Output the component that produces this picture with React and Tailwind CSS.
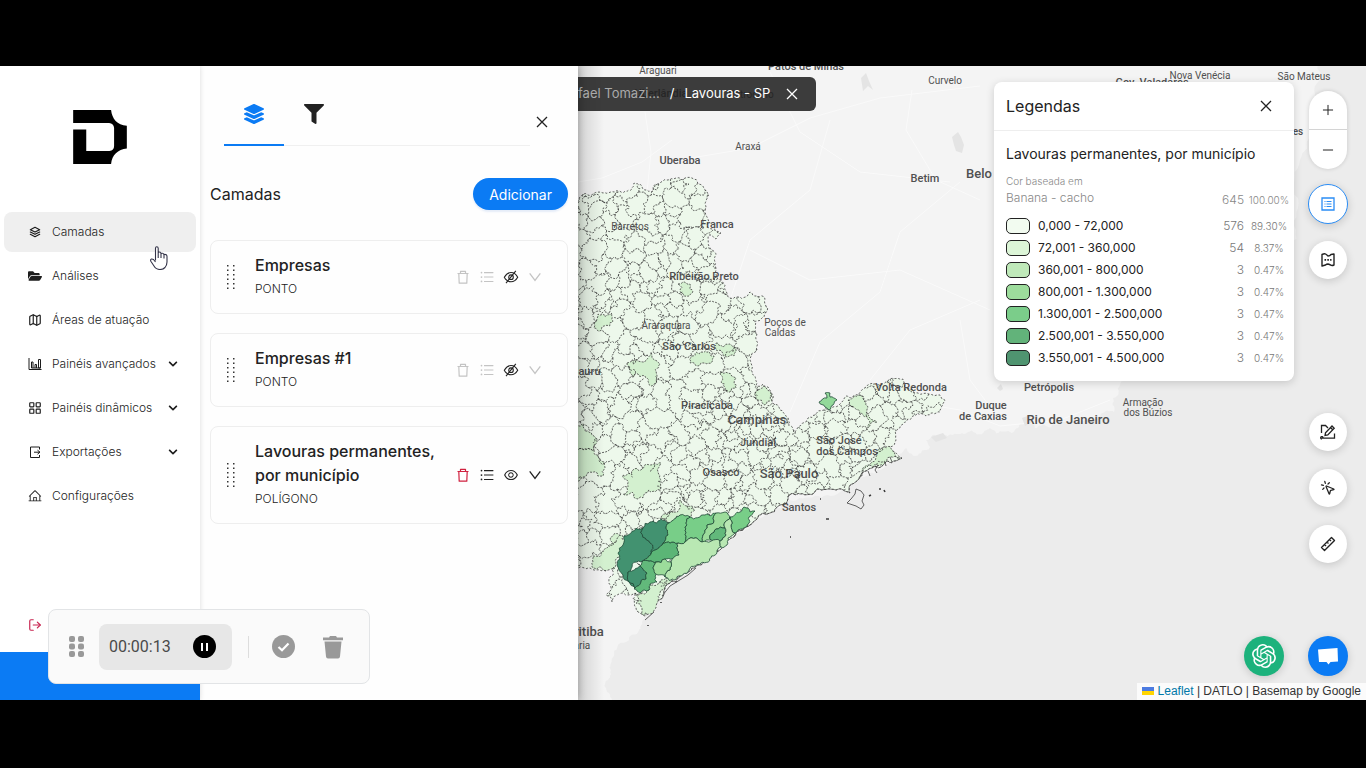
import React from "react";
import { FaFolderOpen, FaFilter, FaLayerGroup, FaChevronDown } from "react-icons/fa";
import { AiOutlineEye, AiOutlineUnorderedList } from "react-icons/ai";
import { SiOpenai } from "react-icons/si";
import { TbStack2 } from "react-icons/tb";
import { PiHouseLine } from "react-icons/pi";
import { Map as MapIcon, LayoutGrid, LogOut, MousePointerClick, Ruler, Plus, Minus } from "lucide-react";

/* ---------- map geometry ---------- */

function makeRandom(seed) {
  let s = seed >>> 0;
  return () => {
    s = (s * 1664525 + 1013904223) >>> 0;
    return s / 4294967296;
  };
}

function parse(str) {
  return str.split(" ").map((p) => p.split(",").map(Number));
}

// Crude fractal displacement so that borders look surveyed rather than straight.
// The shape depends only on the two end points, so neighbours share their border.
function roughLine(a, b, amount) {
  const flip = a[0] > b[0] || (a[0] === b[0] && a[1] > b[1]);
  const from = flip ? b : a;
  const to = flip ? a : b;
  const rnd = makeRandom(Math.round(from[0] * 131 + from[1] * 717 + to[0] * 37 + to[1] * 11));
  rnd();
  const split = (p, q, depth) => {
    const len = Math.hypot(q[0] - p[0], q[1] - p[1]);
    if (depth === 0 || len < 3) return [q];
    const off = (rnd() - 0.5) * Math.min(len, 16) * amount;
    const m = [
      (p[0] + q[0]) / 2 - ((q[1] - p[1]) / len) * off,
      (p[1] + q[1]) / 2 + ((q[0] - p[0]) / len) * off,
    ];
    return [...split(p, m, depth - 1), ...split(m, q, depth - 1)];
  };
  const line = [from, ...split(from, to, 4)];
  if (flip) line.reverse();
  return line.slice(1);
}

function pathOf(points) {
  return points.map((p) => p[0].toFixed(1) + " " + p[1].toFixed(1)).join("L");
}

function roughPolygon(points, amount) {
  const out = [points[0]];
  points.forEach((p, i) => {
    out.push(...roughLine(p, points[(i + 1) % points.length], amount));
  });
  return "M" + pathOf(out) + "Z";
}

const STATE = parse(
  "560,204 578,201 583,194 603,193 618,191 632,189 634,183 645,190 652,192 661,182 668,180 682,180 692,178 698,184 709,195 706,207 707,226 712,229 721,233 716,239 709,235 712,250 715,262 716,275 722,282 728,297 738,297 750,292 757,296 765,299 764,317 753,320 757,335 757,350 750,360 752,374 757,386 768,387 773,395 772,403 780,410 788,425 795,434 808,418 815,415 824,410 840,404 846,396 858,395 866,387 880,385 889,380 903,379 905,390 918,393 940,395 945,401 940,412 926,416 917,413 907,420 897,430 896,440 890,447 895,452 902,458 888,461 872,468 862,473 858,480 849,487 850,493 836,490 817,489 800,494 788,496 784,505 770,513 757,519 750,525 738,531 728,540 720,550 700,565 685,573 665,587 659,600 656,608 645,616 638,612 635,594 628,595 619,594 612,602 606,595 609,578 614,567 608,570 590,568 560,568"
);
const STATE_PATH = roughPolygon(STATE, 0.45);
const COAST = parse(
  "902,458 888,461 872,468 862,473 858,480 849,487 850,493 836,490 817,489 800,494 788,496 784,505 770,513 757,519 750,525 738,531 728,540 720,550 700,565 685,573 665,587 659,600"
);

function clipHalf(poly, a, b) {
  const mx = (a[0] + b[0]) / 2;
  const my = (a[1] + b[1]) / 2;
  const dx = b[0] - a[0];
  const dy = b[1] - a[1];
  const side = (p) => (p[0] - mx) * dx + (p[1] - my) * dy;
  const out = [];
  for (let i = 0; i < poly.length; i++) {
    const p = poly[i];
    const q = poly[(i + 1) % poly.length];
    const sp = side(p);
    const sq = side(q);
    if (sp <= 0) out.push(p);
    if (sp < 0 !== sq < 0) {
      const t = sp / (sp - sq);
      out.push([p[0] + (q[0] - p[0]) * t, p[1] + (q[1] - p[1]) * t]);
    }
  }
  return out;
}

function insideAny(polys, x, y) {
  return polys.some((poly) => {
    let hit = false;
    for (let i = 0, j = poly.length - 1; i < poly.length; j = i++) {
      const [xi, yi] = poly[i];
      const [xj, yj] = poly[j];
      if (yi > y !== yj > y && x < ((xj - xi) * (y - yi)) / (yj - yi) + xi) hit = !hit;
    }
    return hit;
  });
}

const PALE = [
  "678,284 683,282 690,284 693,292 689,296 681,293",
  "594,323 598,314 612,313 613,321 604,326 600,331 594,328",
  "627,363 638,361 646,360 651,352 657,361 660,364 657,377 652,386 645,376 638,374 633,377",
  "716,343 730,344 736,350 734,356 722,352 716,350",
  "692,356 702,352 714,356 712,362 698,366 690,363",
  "720,372 728,373 736,378 736,388 730,392 721,382",
  "758,390 764,386 772,393 772,400 764,405 756,399",
  "570,422 584,424 592,435 594,450 570,452",
  "570,452 594,450 600,460 603,476 570,479",
  "623,475 633,470 661,463 658,472 661,488 645,493 638,499 623,494",
  "661,517 675,512 681,500 695,510 691,517 680,515 669,523",
  "593,556 613,543 611,537 622,535 623,547 616,563 615,568 593,568",
  "635,593 649,590 650,584 661,580 667,578 673,581 660,593 658,607 650,616 641,616 636,603",
  "848,400 862,396 868,407 870,418 877,422 868,428 863,415 852,407",
  "902,458 892,448 883,447 877,455 872,462 862,470 863,472 877,465 890,457",
];
const PALE_POLYS = PALE.map(parse);

const SHADED = [
  ["#429270", "624,536 641,529 643,528 650,543 651,554 641,562 628,572 629,582 635,588 623,575 617,565 618,553 623,545"],
  ["#429270", "643,528 650,522 661,519 669,523 668,535 663,543 651,554 650,543"],
  ["#429270", "628,572 640,566 647,573 641,582 635,588 629,582"],
  ["#5bb576", "678,543 679,555 665,559 656,562 642,562 651,554 663,543 670,543"],
  ["#62b97b", "642,562 656,562 654,570 657,582 650,584 649,590 640,593 634,589 635,588 641,582 647,573 640,566"],
  ["#78ce88", "669,523 680,515 690,517 685,527 685,542 678,543 670,543 663,543 668,535"],
  ["#78ce88", "690,517 705,515 716,513 707,525 703,535 702,542 685,542 685,527"],
  ["#9cdc9b", "716,513 725,512 730,517 725,522 725,528 716,529 711,534 711,540 702,542 703,535 707,525"],
  ["#62b97b", "716,529 725,528 726,535 720,541 711,540 711,534"],
  ["#78ce88", "730,517 740,512 744,507 750,512 755,511 749,517 749,523 735,533 731,525"],
  ["#b9e8b3", "678,543 685,542 702,542 720,541 721,547 701,563 688,572 675,580 665,577 670,570 671,562 679,555"],
  ["#b9e8b3", "730,517 731,525 735,533 728,538 727,545 721,547 720,541 726,535 725,528 725,522"],
  ["#9cdc9b", "656,562 665,559 671,562 670,570 665,577 658,575 654,570"],
  ["#93d99a", "819,402 827,398 825,393 830,393 830,397 837,400 833,405 829,410 825,407"],
];

function buildBorders() {
  const rnd = makeRandom(4211);
  const seeds = [];
  for (let y = 164; y < 632; y += 13) {
    for (let x = 562; x < 960; x += 13) {
      const keep = rnd();
      const px = x + (rnd() - 0.5) * 20;
      const py = y + (rnd() - 0.5) * 20;
      const metro = px > 680 && px < 800 && py > 385 && py < 500;
      if (keep < (metro ? 0.98 : 0.72) && !insideAny(PALE_POLYS, px, py)) seeds.push([px, py]);
    }
  }
  PALE_POLYS.forEach((p) => {
    seeds.push([p.reduce((s, q) => s + q[0], 0) / p.length, p.reduce((s, q) => s + q[1], 0) / p.length]);
  });
  const seen = new Set();
  let d = "";
  seeds.forEach((s) => {
    let cell = [[s[0] - 60, s[1] - 60], [s[0] + 60, s[1] - 60], [s[0] + 60, s[1] + 60], [s[0] - 60, s[1] + 60]];
    seeds.forEach((o) => {
      if (o !== s && Math.abs(o[0] - s[0]) < 90 && Math.abs(o[1] - s[1]) < 90) cell = clipHalf(cell, s, o);
    });
    cell.forEach((p, i) => {
      const a = p;
      const b = cell[(i + 1) % cell.length];
      const key = Math.round(a[0] + b[0]) + ":" + Math.round(a[1] + b[1]);
      if (seen.has(key) || Math.hypot(a[0] - b[0], a[1] - b[1]) < 1) return;
      seen.add(key);
      if (insideAny(PALE_POLYS, (a[0] + b[0]) / 2, (a[1] + b[1]) / 2)) return;
      d += "M" + pathOf([a, ...roughLine(a, b, 0.9)]);
    });
  });
  return d;
}

const BORDERS = buildBorders();

const LABELS = [
  ["Araguari", 658, 74, "10px", 400],
  ["Patos de Minas", 806, 70, "11px", 500],
  ["Uberlândia", 661, 97, "11px", 500],
  ["Patrocínio", 751, 98, "10px", 400],
  ["Curvelo", 945, 84, "10px", 400],
  ["Gov. Valadares", 1152, 86, "11px", 500],
  ["Nova Venécia", 1200, 79, "10px", 400],
  ["São Mateus", 1304, 80, "10px", 400],
  ["Linhares", 1284, 135, "10px", 500],
  ["Araxá", 748, 150, "10px", 400],
  ["Uberaba", 680, 164, "11px", 500],
  ["Betim", 925, 182, "11px", 500],
  ["Belo Horizonte", 1009, 178, "13px", 500],
  ["Barretos", 630, 230, "10px", 400],
  ["Franca", 717, 228, "11px", 500],
  ["Ribeirão Preto", 704, 280, "11px", 500],
  ["Araraquara", 666, 329, "10px", 400],
  ["Poços de", 785, 326, "10px", 400],
  ["Caldas", 780, 336, "10px", 400],
  ["São Carlos", 689, 350, "11px", 500],
  ["Bauru", 586, 375, "11px", 500],
  ["Piracicaba", 707, 409, "11px", 500],
  ["Campinas", 757, 424, "13px", 500],
  ["Jundiaí", 758, 446, "11px", 500],
  ["Osasco", 721, 476, "11px", 500],
  ["São Paulo", 789, 478, "13px", 500],
  ["Santos", 799, 511, "11px", 500],
  ["São José", 839, 444, "11px", 500],
  ["dos Campos", 847, 455, "11px", 500],
  ["Volta Redonda", 911, 391, "11px", 500],
  ["Duque", 991, 409, "11px", 500],
  ["de Caxias", 983, 420, "11px", 500],
  ["Petrópolis", 1049, 391, "11px", 500],
  ["Rio de Janeiro", 1068, 424, "13px", 500],
  ["Armação", 1143, 406, "10px", 400],
  ["dos Búzios", 1148, 416, "10px", 400],
  ["Curitiba", 581, 636, "13px", 500],
  ["Araucária", 569, 649, "10px", 400],
];

function BaseMap() {
  return (
    <svg
      className="absolute inset-0 h-full w-full"
      viewBox="578 66 788 634"
      preserveAspectRatio="xMidYMid slice"
      role="img"
      aria-label="Mapa de lavouras permanentes por município"
    >
      <defs>
        <clipPath id="state">
          <path d={STATE_PATH} />
        </clipPath>
        <linearGradient id="edge" x1="0" x2="1">
          <stop offset="0" stopColor="#000" stopOpacity="0.14" />
          <stop offset="1" stopColor="#000" stopOpacity="0" />
        </linearGradient>
      </defs>
      <rect x="578" y="66" width="788" height="634" fill="#ececec" />
      <path
        fill="#f4f4f4"
        d={roughPolygon(
          parse("560,50 1322,50 1316,110 1300,160 1296,230 1270,290 1230,330 1180,345 1140,368 1120,385 1113,398 1114,412 1090,421 1060,424 1035,428 1028,421 1018,428 990,428 960,434 940,436 926,440 930,447 915,456 906,448 896,462 860,478 840,492 790,500 750,524 720,548 680,576 662,594 642,622 626,642 614,656 608,680 612,710 560,710"),
          0.5
        )}
      />
      <path
        fill="none"
        stroke="#fafafa"
        d="M645 112l6 40-4 40M672 140l-30 22-40 16-24 4M680 160l70-12 60-30 70-20 100-12M770 72l30 60 60 40 90 10M912 90l-6 40 30 50 44 20M830 120l-20 70-60 50-20 60M960 182l-60 50-20 60-60 50-30 70M750 250l60 30 90-10 90 40M870 380l40-50 70-30M900 400l60 10 40 16 60-6 50-20M960 320l10 60 30 40"
      />
      <path
        fill="#e4e4e4"
        d="M952 137l6-5 3 5 3 8-2 8-6-2-2-6zM861 78l5-5 3 8 4 9-5-4-5 5zM931 437l12-4 4 5-11 4zM1022 418l8-3 1 8-6 3zM997 388l4-4 2 5-3 2z"
      />
      <path d={STATE_PATH} fill="#edf8eb" />
      <g clipPath="url(#state)">
        {PALE.map((p) => (
          <path key={p} d={roughPolygon(parse(p), 0.6)} fill="#d3f0cf" />
        ))}
      </g>
      <g fill="#505050" textAnchor="middle" fontFamily="Roboto, sans-serif">
        {LABELS.map(([text, x, y, size, weight]) => (
          <text key={text} x={x} y={y} fontSize={size} fontWeight={weight}>
            {text}
          </text>
        ))}
      </g>
      <g fill="none" stroke="#3c3c3c" strokeWidth="0.8">
        <g clipPath="url(#state)" strokeDasharray="2 1.2">
          <path d={BORDERS} />
          {PALE.map((p) => (
            <path key={p} d={roughPolygon(parse(p), 0.6)} />
          ))}
        </g>
        <path d={STATE_PATH} strokeDasharray="2 1.8" />
        {COAST.slice(0, -1).map((p, i) => (
          <path key={i} strokeWidth="0.6" d={"M" + pathOf([p, ...roughLine(p, COAST[i + 1], 0.45)])} />
        ))}
        <path d="M856 489l5 2 3 4-2 6 2 4-3 4-5-3-9-3 4-4 4-5zM878 465l-3 5 2 3M868 471l2 5M862 473l-3 5M885 462l1 4M890 457l2 5M662 596l8-10 18-11 8-7M645 620l9-8" />
        <path strokeWidth="1.6" d="M826 519h3M869 496l2-1M879 489h2M790 537h1M648 625v1M820 499h1M661 602v1M884 490l1 2" />
      </g>
      <g stroke="#1f4a37" strokeWidth="0.8">
        {SHADED.map(([fill, p]) => (
          <path key={p} d={roughPolygon(parse(p), 0.5)} fill={fill} />
        ))}
      </g>
      <rect x="578" y="66" width="26" height="634" fill="url(#edge)" />
    </svg>
  );
}

/* ---------- small drawings ---------- */

function Close({ className }) {
  return (
    <svg className={className} viewBox="0 0 12 12" fill="none" stroke="currentColor" strokeWidth="1.3" aria-hidden="true">
      <path d="M1 1l10 10M11 1L1 11" />
    </svg>
  );
}

function Logo() {
  return (
    <svg className="h-[54px] w-[54px]" viewBox="0 0 160 161" role="img" aria-label="Datlo">
      <path d="M0 0H113C116 26 131 45 160 47V115C133 118 116 134 113 161H0V58H39V122H108Q122 120 122 107V54Q121 40 107 39H0Z" />
    </svg>
  );
}

function ChartIcon({ className }) {
  return (
    <svg className={className} viewBox="0 0 14 14" fill="none" stroke="currentColor" aria-hidden="true">
      <path d="M1 1v11.500h12.500M3.500 11V5h1.500v6M7 11V7.500h1.500V11M10.500 11V2.500h2V11zM3.500 11h9" />
    </svg>
  );
}

function ExportIcon({ className }) {
  return (
    <svg className={className} viewBox="0 0 14 14" fill="none" stroke="currentColor" aria-hidden="true">
      <path d="M11.500 4.500V2h-9v10.500h9V10M6 7.200h6M9.500 5.200l2.500 2-2.500 2" />
    </svg>
  );
}

function DragDots() {
  return (
    <svg className="h-7 w-3 shrink-0" viewBox="0 0 12 28" fill="#333" aria-hidden="true">
      {[0, 1, 2, 3, 4, 5].map((r) => (
        <g key={r}>
          <rect x="2" y={2 + r * 4.5} width="1.5" height="1.5" />
          <rect x="8" y={2 + r * 4.5} width="1.5" height="1.5" />
        </g>
      ))}
    </svg>
  );
}

function Trash({ className }) {
  return (
    <svg className={className} viewBox="0 0 16 16" fill="none" stroke="currentColor" strokeWidth="1.2" strokeLinejoin="round" aria-hidden="true">
      <path d="M2.500 4.500h11M5.500 4.500V2.300h5v2.200M3.800 4.500l.4 9.700h7.600l.4-9.700" />
    </svg>
  );
}

function EyeOff({ className }) {
  return (
    <svg className={className} viewBox="0 0 16 16" fill="none" stroke="currentColor" strokeWidth="1.1" aria-hidden="true">
      <path d="M1.300 8.200C3.500 4.600 5.700 3.500 8 3.500s4.700 1.100 6.700 4.700C12.700 11.800 10.500 12.700 8 12.700S3.300 11.800 1.300 8.200z" />
      <circle cx="8" cy="8.200" r="2.300" />
      <path d="M12.800 1.800L3 14.200" />
    </svg>
  );
}

function ChevronV({ className }) {
  return (
    <svg className={className} viewBox="0 0 14 14" fill="none" stroke="currentColor" strokeWidth="1.3" aria-hidden="true">
      <path d="M1.700 3.300L7 10.300l5.300-7" />
    </svg>
  );
}

/* ---------- sidebar ---------- */

const NAV = [
  { label: "Camadas", Icon: TbStack2, active: true },
  { label: "Análises", Icon: FaFolderOpen },
  { label: "Áreas de atuação", Icon: MapIcon },
  { label: "Painéis avançados", Icon: ChartIcon, more: true },
  { label: "Painéis dinâmicos", Icon: LayoutGrid, more: true },
  { label: "Exportações", Icon: ExportIcon, more: true },
  { label: "Configurações", Icon: PiHouseLine },
];

function Sidebar() {
  return (
    <aside className="z-20 flex w-[200px] shrink-0 flex-col bg-white shadow-[0_0_5px_rgba(0,0,0,0.14)]">
      <div className="flex justify-center pt-11 pb-12">
        <Logo />
      </div>
      <nav className="flex flex-col gap-1 px-1">
        {NAV.map(({ label, Icon, active, more }) => (
          <a
            key={label}
            href="#"
            className={
              active
                ? "flex h-10 items-center rounded-lg bg-[#efefef] pr-[18px] pl-6 text-[12px] font-light text-[#1c1c1c]"
                : "flex h-10 items-center rounded-lg pr-[18px] pl-6 text-[12px] font-light text-[#1c1c1c]"
            }
          >
            <Icon className="mr-2.5 h-3.5 w-3.5 shrink-0" />
            <span className="grow whitespace-nowrap">{label}</span>
            {more && <FaChevronDown className="h-2.5 w-2.5 shrink-0" />}
          </a>
        ))}
      </nav>
      <button type="button" aria-label="Sair" className="mt-auto mb-5 ml-7 w-3.5 text-[#c8234f]">
        <LogOut className="h-3.5 w-3.5 -scale-x-100 rotate-180" />
      </button>
      <div className="h-12 bg-[#0b7bf4]" />
    </aside>
  );
}

/* ---------- layers panel ---------- */

const LAYERS = [
  { title: "Empresas", kind: "PONTO" },
  { title: "Empresas #1", kind: "PONTO" },
  { title: "Lavouras permanentes, por município", kind: "POLÍGONO", on: true },
];

function LayerCard({ title, kind, on }) {
  const soft = on ? "flex w-6 justify-center text-[#222]" : "flex w-6 justify-center text-[#c4c4c4]";
  return (
    <li className="flex items-center rounded-lg border border-[#eee] py-3 pr-5 pl-3.5">
      <DragDots />
      <div className="ml-[18px] grow">
        <h3 className="text-[16px] leading-6 font-medium text-[#222]">{title}</h3>
        <p className="text-[12px] leading-6 font-light text-[#222]">{kind}</p>
      </div>
      <div className="flex shrink-0 items-center">
        <button type="button" aria-label="Excluir" className={on ? "flex w-6 justify-center text-[#d0213f]" : soft}>
          <Trash className="h-4 w-4" />
        </button>
        <button type="button" aria-label="Legenda" className={soft}>
          <AiOutlineUnorderedList className="h-4 w-4" />
        </button>
        <button type="button" aria-label="Visibilidade" className="flex w-6 justify-center text-[#222]">
          {on ? <AiOutlineEye className="h-4 w-4" /> : <EyeOff className="h-4 w-4" />}
        </button>
        <button type="button" aria-label="Expandir" className={soft}>
          <ChevronV className="h-3.5 w-3.5" />
        </button>
      </div>
    </li>
  );
}

function LayersPanel() {
  return (
    <section className="z-10 flex w-[378px] shrink-0 flex-col bg-[#fefefe] px-2.5 pt-[18px] shadow-[0_0_8px_rgba(0,0,0,0.3)]">
      <div className="flex items-start pr-[18px] pl-3.5">
        <div className="flex grow border-b border-[#f0f0f0]" role="tablist">
          <button type="button" role="tab" aria-selected="true" aria-label="Camadas" className="-mb-px flex h-[62px] w-[60px] justify-center border-b-2 border-[#0b7bf4] pt-5 text-[#0b7bf4]">
            <FaLayerGroup className="h-5 w-5" />
          </button>
          <button type="button" role="tab" aria-selected="false" aria-label="Filtros" className="flex h-[61px] w-[60px] justify-center pt-5 text-[#222]">
            <FaFilter className="h-5 w-5" />
          </button>
        </div>
        <button type="button" aria-label="Fechar" className="mt-8 ml-1 flex w-4 justify-center text-[#222]">
          <Close className="h-3 w-3" />
        </button>
      </div>
      <div className="mt-8 flex items-center justify-between">
        <h2 className="text-[16px] text-[#222]">Camadas</h2>
        <button type="button" className="h-8 rounded-full bg-[#0b7bf4] px-4 text-[14px] text-white shadow-[0_2px_2px_rgba(0,80,200,0.1)]">
          Adicionar
        </button>
      </div>
      <ul className="mt-[30px] flex flex-col gap-[19px]">
        {LAYERS.map((l) => (
          <LayerCard key={l.title} {...l} />
        ))}
      </ul>
    </section>
  );
}

/* ---------- legend ---------- */

const CLASSES = [
  ["#f2fbf0", "0,000 - 72,000", "576", "89.30%"],
  ["#dcf5d7", "72,001 - 360,000", "54", "8.37%"],
  ["#bfe9b9", "360,001 - 800,000", "3", "0.47%"],
  ["#9ddc9c", "800,001 - 1.300,000", "3", "0.47%"],
  ["#7bcd8a", "1.300,001 - 2.500,000", "3", "0.47%"],
  ["#62b37a", "2.500,001 - 3.550,000", "3", "0.47%"],
  ["#4f9470", "3.550,001 - 4.500,000", "3", "0.47%"],
];

function Legend() {
  return (
    <section className="absolute top-4 right-[72px] w-[300px] rounded-lg bg-white pb-3 shadow-[0_2px_8px_rgba(0,0,0,0.16)]">
      <header className="flex h-[49px] items-center justify-between border-b border-[#eee] pr-[22px] pl-3 text-[#222]">
        <h2 className="text-[16px]">Legendas</h2>
        <button type="button" aria-label="Fechar legendas">
          <Close className="h-3 w-3" />
        </button>
      </header>
      <h3 className="mt-[11px] px-3 text-[14px] leading-6 text-[#222]">Lavouras permanentes, por município</h3>
      <p className="mt-[7px] px-3 text-[10px] leading-4 font-light text-[#888]">Cor baseada em</p>
      <table className="w-full text-left">
        <thead>
          <tr className="h-[26px] align-top text-[#888]">
            <th colSpan="2" className="pl-3 text-[12px] font-light">Banana - cacho</th>
            <th className="w-10 pt-0.5 text-right text-[12px] font-light">645</th>
            <th className="w-[50px] pt-0.5 text-center text-[10px] leading-[18px] font-light">100.00%</th>
          </tr>
        </thead>
        <tbody>
          {CLASSES.map(([color, range, count, share]) => (
            <tr key={range} className="h-[22px]">
              <td className="w-11 pl-3">
                <span className="block h-4 w-6 rounded-[5px] border border-[#222]" style={{ backgroundColor: color }} />
              </td>
              <td className="text-[12px] text-[#222]">{range}</td>
              <td className="text-right text-[12px] font-light text-[#777]">{count}</td>
              <td className="text-center text-[10px] font-light text-[#777]">{share}</td>
            </tr>
          ))}
        </tbody>
      </table>
    </section>
  );
}

/* ---------- map controls ---------- */

function RoundButton({ label, children }) {
  return (
    <button type="button" aria-label={label} className="flex h-[38px] w-[38px] items-center justify-center rounded-full bg-white text-[#222] shadow-[0_2px_8px_rgba(0,0,0,0.16)]">
      {children}
    </button>
  );
}

function MapControls() {
  return (
    <div className="absolute top-[25px] right-[18px] bottom-6 flex w-10 flex-col items-center">
      <div className="flex w-[38px] flex-col divide-y divide-[#d4d4d4] rounded-full bg-white text-[#222] shadow-[0_0_4px_rgba(0,0,0,0.16)]">
        <button type="button" aria-label="Aproximar" className="flex h-[39px] items-center justify-center">
          <Plus className="h-4 w-4" strokeWidth={1.5} />
        </button>
        <button type="button" aria-label="Afastar" className="flex h-[39px] items-center justify-center">
          <Minus className="h-4 w-4" strokeWidth={1.5} />
        </button>
      </div>
      <button type="button" aria-label="Legendas" className="mt-[15px] flex h-10 w-10 items-center justify-center rounded-full border border-[#2b8df5] bg-white text-[#2b8df5] shadow-[0_2px_8px_rgba(0,0,0,0.16)]">
        <svg className="h-3.5 w-3.5" viewBox="0 0 14 14" fill="none" stroke="currentColor" aria-hidden="true">
          <path strokeWidth="1.3" d="M1 1h12v12H1z" />
          <path d="M3.500 4.500h1M5.500 4.500h5M3.500 7h1M5.500 7h5M3.500 9.500h1M5.500 9.500h5" />
        </svg>
      </button>
      <div className="mt-[17px]">
        <RoundButton label="Mapa base">
          <svg className="h-4 w-4" viewBox="0 0 16 16" fill="none" stroke="currentColor" strokeWidth="1.4" strokeLinejoin="round" aria-hidden="true">
            <path d="M2 2.500Q4.500 1.300 5.500 2T8 4Q10 4 11 2.500L14 2V13Q12 14 10.800 13.200T8 12Q6.500 12 5.500 13L2 14z" />
            <path strokeWidth="1.7" strokeDasharray="1.6 1.2" d="M4.500 7.800h7" />
          </svg>
        </RoundButton>
      </div>
      <div className="mt-[134px] flex flex-col gap-[18px]">
        <RoundButton label="Desenhar área">
          <svg className="h-4 w-4" viewBox="0 0 16 16" fill="none" stroke="currentColor" strokeWidth="1.3" aria-hidden="true">
            <path d="M1.500 9V1.500H5.500L8 4M1.500 14.200H14.500V9.500M3 14.200A1.200 1.200 0 1 0 1.800 15M5 11.500l.5-2.800L12 2l2.200 2.200L7.800 10.900zM10.500 3.500l2.200 2.200" />
          </svg>
        </RoundButton>
        <RoundButton label="Selecionar">
          <MousePointerClick className="h-4 w-4" strokeWidth={1.9} />
        </RoundButton>
        <RoundButton label="Medir">
          <svg className="h-4 w-4" viewBox="0 0 16 16" fill="none" stroke="currentColor" strokeWidth="1.4" strokeLinejoin="round" aria-hidden="true">
            <path d="M1.500 11.500L11.500 1.500 14.500 4.500 4.500 14.500zM4.500 8.500l1.500 1.500M7 6l1.500 1.500M9.500 3.500L11 5" />
          </svg>
        </RoundButton>
      </div>
      <button type="button" aria-label="Conversar" className="mt-auto flex h-10 w-10 shrink-0 items-center justify-center rounded-full bg-[#0b7bf4] text-white shadow-[0_2px_8px_rgba(0,0,0,0.16)]">
        <svg className="h-5 w-5" viewBox="0 0 20 20" fill="currentColor" aria-hidden="true">
          <path d="M0 3.500L19.500 2l.5 13.500-7.500.5L10.500 18.500 8.500 16 1 16z" />
        </svg>
      </button>
    </div>
  );
}

function MapArea() {
  return (
    <main className="relative min-w-0 grow overflow-hidden">
      <BaseMap />
      <div className="absolute top-[11px] left-0 flex h-[34px] items-center rounded-r-md bg-[#202020]/87 pr-[18px] text-[13px] text-white">
        <span className="text-[#aaa]">fael Tomazi...</span>
        <span className="mx-2.5">/</span>
        <span>Lavouras - SP</span>
        <button type="button" aria-label="Fechar mapa" className="ml-4">
          <Close className="h-3 w-3" />
        </button>
      </div>
      <Legend />
      <MapControls />
      <button type="button" aria-label="Assistente" className="absolute right-[82px] bottom-6 flex h-10 w-10 items-center justify-center rounded-full bg-[#1cb27c] text-white shadow-[0_2px_8px_rgba(0,0,0,0.16)]">
        <SiOpenai className="h-6 w-6" />
      </button>
      <div className="absolute right-0 bottom-0 flex h-[17px] items-center gap-1 bg-white/80 px-[5px] pb-px font-['Liberation_Sans',sans-serif] text-[12px] text-[#333]">
        <span className="flex h-2 w-3 flex-col" aria-hidden="true">
          <span className="h-1 bg-[#4c7be1]" />
          <span className="h-1 bg-[#ffd500]" />
        </span>
        <span>
          <a href="https://leafletjs.com" className="text-[#0078a8]">Leaflet</a> | DATLO | Basemap by Google
        </span>
      </div>
    </main>
  );
}

/* ---------- recorder overlay ---------- */

function Recorder() {
  return (
    <div className="absolute bottom-4 left-12 z-30 flex h-[75px] w-[322px] items-center rounded-lg border border-[#e2e4e6] bg-[#fafafa] pl-5">
      <svg className="h-[21px] w-[15px]" viewBox="0 0 15 21" fill="#999" aria-hidden="true">
        {[0, 7.5, 15].map((y) => (
          <g key={y}>
            <rect y={y} width="6" height="6" rx="2" />
            <rect x="9" y={y} width="6" height="6" rx="2" />
          </g>
        ))}
      </svg>
      <div className="ml-[15px] flex h-[46px] w-[133px] items-center justify-between rounded-lg bg-[#e7e7e7] pr-4 pl-2.5">
        <time className="font-[Roboto,sans-serif] text-[16px] text-[#4a4a4a]">00:00:13</time>
        <button type="button" aria-label="Pausar" className="flex h-[23px] w-[23px] items-center justify-center gap-[3px] rounded-full bg-black">
          <span className="h-2 w-[2px] bg-white" />
          <span className="h-2 w-[2px] bg-white" />
        </button>
      </div>
      <span className="ml-4 h-[22px] w-px bg-[#ddd]" />
      <button type="button" aria-label="Concluir" className="ml-[23px]">
        <svg className="h-[23px] w-[23px]" viewBox="0 0 23 23" aria-hidden="true">
          <circle cx="11.500" cy="11.500" r="11.500" fill="#999" />
          <path d="M6.500 12l3.500 3.300 6.500-6.800" fill="none" stroke="#fff" strokeWidth="2.2" />
        </svg>
      </button>
      <button type="button" aria-label="Descartar" className="ml-7 text-[#999]">
        <svg className="h-6 w-5" viewBox="0 0 20 24" fill="currentColor" aria-hidden="true">
          <path d="M0 2.500h6L7 1h6l1 1.500h6v2.700H0zM1.500 6.500h17l-1.500 15Q16.800 23.500 15 23.500H5Q3.200 23.500 3 21.500z" />
        </svg>
      </button>
    </div>
  );
}

function HandCursor() {
  return (
    <svg className="pointer-events-none absolute top-[180px] left-[150px] z-30 h-6 w-[18px]" viewBox="0 0 18 24" fill="#fff" stroke="#333348" strokeWidth="1.1" strokeLinejoin="round" aria-hidden="true">
      <path d="M5.500 14.500V2.200Q5.500.8 6.800.8T8.200 2.200V8.500V6.500Q10.800 5 11 8V7.500Q13.500 6.500 14 9V8.500Q17 8 17 10.500V16Q17 19 15 21.500 13 23.500 10 23.500 6 23.500 4 20L1 15.500Q0 13.500 1.500 13 2.500 12.800 3.500 13.500L5.500 16M8.200 8.500V12M11 8v4M14 9v3.500" />
    </svg>
  );
}

export default function App() {
  return (
    <div className="flex h-screen flex-col bg-black pt-[66px] pb-[68px] font-[Inter,'Noto_Sans',sans-serif]">
      <div className="relative flex min-h-0 grow overflow-hidden bg-white">
        <Sidebar />
        <LayersPanel />
        <MapArea />
        <Recorder />
        <HandCursor />
      </div>
    </div>
  );
}
